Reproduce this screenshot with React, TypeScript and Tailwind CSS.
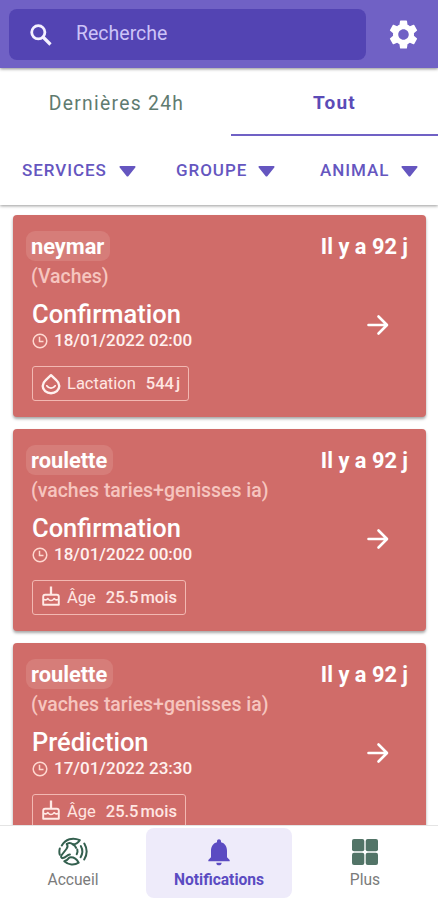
import { MdNotifications, MdSettings } from "react-icons/md";

interface Notification {
  name: string;
  group: string;
  title: string;
  date: string;
  since: string;
  kind: "lactation" | "age";
  value: string;
  unit: string;
}

const notifications: Notification[] = [
  {
    name: "neymar",
    group: "(Vaches)",
    title: "Confirmation",
    date: "18/01/2022 02:00",
    since: "Il y a 92 j",
    kind: "lactation",
    value: "544",
    unit: "j",
  },
  {
    name: "roulette",
    group: "(vaches taries+genisses ia)",
    title: "Confirmation",
    date: "18/01/2022 00:00",
    since: "Il y a 92 j",
    kind: "age",
    value: "25.5",
    unit: "mois",
  },
  {
    name: "roulette",
    group: "(vaches taries+genisses ia)",
    title: "Prédiction",
    date: "17/01/2022 23:30",
    since: "Il y a 92 j",
    kind: "age",
    value: "25.5",
    unit: "mois",
  },
];

function Caret() {
  return (
    <svg className="shrink-0" width="17" height="11" viewBox="0 0 17 11" fill="#6556c0">
      <path d="M1.4 0h14.2c.9 0 1.3 1 .7 1.6L9.5 10c-.6.7-1.4.7-2 0L.7 1.6C.1 1 .5 0 1.4 0z" />
    </svg>
  );
}

function DropIcon() {
  return (
    <svg className="shrink-0" width="20" height="22" viewBox="0 0 20 22" fill="none" stroke="#fff1ef" strokeLinecap="round">
      <path d="M10 2.200 4.500 7.300A7.900 7.900 0 0 0 1.700 13a8.300 7.200 0 0 0 16.600 0 7.900 7.900 0 0 0-2.800-5.700z" strokeWidth="2.400" strokeLinejoin="round" />
      <path d="M5.800 12.800c1.200 1.800 2.500 2.400 4.200 2.400s3-.6 4.200-2.400" strokeWidth="1.700" />
    </svg>
  );
}

function CakeIcon() {
  return (
    <svg className="-mt-[3px] shrink-0" width="20" height="22" viewBox="0 0 20 22" fill="none" stroke="#ffe9e5" strokeWidth="1.900" strokeLinejoin="round">
      <path d="M10 1.500v8" strokeWidth="2.300" />
      <path d="M2.200 19.800v-8c0-1.300.8-2.100 2-2.100h11.600c1.200 0 2 .8 2 2.100v8z" />
      <path d="M2.200 13.800c1.700 1.500 3.500 1.400 4.700-.2.900 1.300 1.900 1.900 3.100 1.900s2.200-.6 3.100-1.900c1.200 1.600 3 1.700 4.700.2" strokeWidth="1.600" />
    </svg>
  );
}

function HerdIcon() {
  return (
    <svg width="30" height="30" viewBox="0 0 30 30" fill="none" stroke="#34604f" strokeWidth="2" strokeLinecap="round" strokeLinejoin="round">
      <path d="M3.800 8.500C7.300 2.300 14.500-.2 21.800 3.200c-1.800 2.700-4.300 4.100-7 4.100-1.600-1.400-4-1.600-6-.3" />
      <path d="M1.800 11.500c-.6 2.200-.6 4.300 0 6.300" />
      <path d="M8.800 7c1.200 1.700.9 3.300-.4 5l-4.700 6c-1.300 1.800-.3 3.300 1.200 3.100 3.200-.4 3.900-3.400 7-3.500" />
      <path d="M14.800 7.300c1.600.8 2.700 1.900 3.300 3.600" />
      <path d="M6.300 24.200c2-.4 3.700-1.700 5.200-3.800 3.700-.6 6.600.6 9.200 5.300-4.400 2.700-10.300 2.300-14.400-1.500z" />
      <path d="M19.300 12.500c.5 1.600.3 3.200-.6 4.700" />
      <path d="M22.800 9c2 3.500 1.900 7.700-.2 11.200" />
      <path d="M26.300 6.500c2.900 4.900 2.900 11.100-.1 16" />
    </svg>
  );
}

function NotificationCard({ item }: { item: Notification }) {
  return (
    <article className="flex h-[202px] shrink-0 justify-between rounded-[4px] bg-[#d06c69] shadow-[0_2px_3px_rgba(0,0,0,0.35)]">
      <div className="flex flex-col items-start pl-[13px] pt-4">
        <span className="h-[30px] rounded-[9px] bg-[#d67d79] px-[5px] pr-[6px] text-[21.800px] font-bold leading-[31px] text-white">
          {item.name}
        </span>
        <span className="ml-[5px] mt-1 text-[19.450px] font-medium leading-[24px] text-[#f6c5bf]">{item.group}</span>
        <h2 className="ml-1.5 mt-[10px] text-[25.500px] font-medium leading-[30px] text-white">{item.title}</h2>
        <div className="ml-1.5 flex h-[22px] items-center gap-[6px] text-[#fff1ef]">
          <svg className="mt-px" width="16" height="16" viewBox="0 0 16 16" fill="none" stroke="#ffd8d0" strokeWidth="1.5">
            <circle cx="8" cy="8" r="6.800" />
            <path d="M7.500 3.800v4.700h4" />
          </svg>
          <time className="text-[17.050px] font-medium leading-[22px]">{item.date}</time>
        </div>
        <div className="ml-1.5 mt-[15px] flex h-[35px] items-center rounded-[3px] border border-[#f2b8b2] pl-2 pr-[8px] text-[16.500px] text-[#ffe6e2]">
          {item.kind === "lactation" ? <DropIcon /> : <CakeIcon />}
          <span className="ml-[6px] pt-px">{item.kind === "lactation" ? "Lactation" : "Âge"}</span>
          <span className="ml-[10px] pt-px font-medium">{item.value}</span>
          <span className="ml-[2px] pt-px font-medium">{item.unit}</span>
        </div>
      </div>
      <div className="flex flex-col items-end pr-[18px] pt-4">
        <span className="h-[30px] text-[21.800px] font-bold leading-[31px] text-white">{item.since}</span>
        <svg className="mr-[19px] mt-[53px]" width="22" height="22" viewBox="0 0 22 22" fill="none" stroke="#fff" strokeWidth="2.600" strokeLinecap="round" strokeLinejoin="round">
          <path d="M1.500 11h18M11.500 2.500l8.500 8.500-8.500 8.500" />
        </svg>
      </div>
    </article>
  );
}

export default function App() {
  return (
    <div className="flex h-[900px] w-[438px] flex-col overflow-hidden bg-white font-['Roboto',sans-serif]">
      {/* Barre de recherche */}
      <header className="z-20 flex h-[68px] shrink-0 items-center bg-[#7061c5] pl-[9px] shadow-[0_1px_3px_rgba(0,0,0,0.45)]">
        <div className="flex h-[51px] w-[357px] items-center rounded-[8px] bg-[#5344b3] pl-[21px]">
          <svg className="mt-[2px]" width="22" height="22" viewBox="0 0 22 22" fill="none" stroke="#f4f0ff" strokeWidth="2.800">
            <circle cx="8.300" cy="8.300" r="6.600" />
            <path d="m13 13 7.500 7.500" strokeWidth="3.200" />
          </svg>
          <span className="ml-6 text-[19.500px] text-[#cdc3f8]">Recherche</span>
        </div>
        <MdSettings size={35} className="ml-5 text-white" />
      </header>

      {/* Onglets et filtres */}
      <div className="z-10 h-[137px] shrink-0 bg-white shadow-[0_1px_3px_rgba(0,0,0,0.4)]">
        <div className="flex h-[68px]">
          <button className="w-[231px] pl-[2px] pt-[5px] text-[19.300px] tracking-[1.300px] text-[#5f7b70]">Dernières 24h</button>
          <button className="flex-1 border-b-2 border-[#7061c5] pt-1 text-[19px] font-bold tracking-[1.300px] text-[#5b4bb7]">Tout</button>
        </div>
        <div className="flex h-[69px] items-center pl-[22px] pt-px text-[17px] font-medium tracking-[0.950px] text-[#6556c0]">
          <button className="flex w-[154px] items-center gap-3">SERVICES<Caret /></button>
          <button className="flex w-[144px] items-center gap-[11px]">GROUPE<Caret /></button>
          <button className="flex items-center gap-[12px]">ANIMAL<Caret /></button>
        </div>
      </div>

      {/* Liste des notifications */}
      <main className="flex min-h-0 flex-1 flex-col gap-3 overflow-hidden pl-[13px] pr-3 pt-[10px]">
        {notifications.map((item, i) => (
          <NotificationCard key={i} item={item} />
        ))}
      </main>

      {/* Navigation */}
      <nav className="z-10 flex h-[75px] shrink-0 border-t border-[#e4e4e4] bg-white text-[15.600px] text-[#7b7b7b]">
        <button className="flex w-[146px] flex-col items-center pt-[11px]">
          <HerdIcon />
          <span className="mt-[2px] leading-[22px]">Accueil</span>
        </button>
        <button className="mt-[2px] flex h-[70px] w-[146px] flex-col items-center rounded-[8px] bg-[#eeebfa] pt-[8px] text-[#5b4bc2]">
          <MdNotifications size={32} />
          <span className="mt-px font-bold leading-[22px]">Notifications</span>
        </button>
        <button className="flex w-[146px] flex-col items-center pt-[13px]">
          <svg width="26" height="26" viewBox="0 0 26 26" fill="#527467">
            <rect width="12.300" height="12.300" rx="2" />
            <rect x="13.700" width="12.300" height="12.300" rx="2" />
            <rect y="13.700" width="12.300" height="12.300" rx="2" />
            <rect x="13.700" y="13.700" width="12.300" height="12.300" rx="2" />
          </svg>
          <span className="mt-1 leading-[22px]">Plus</span>
        </button>
      </nav>
    </div>
  );
}
